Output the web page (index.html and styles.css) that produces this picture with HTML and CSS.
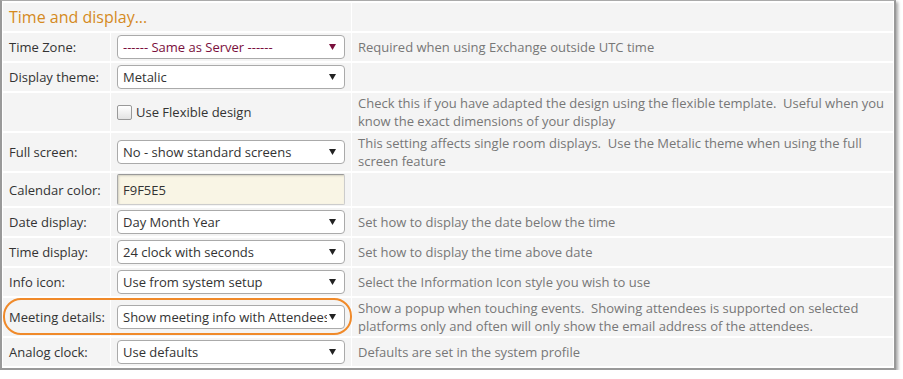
FILE: index.html
```html
<!DOCTYPE html>
<html>
<head>
<meta charset="utf-8">
<link rel="stylesheet" href="styles.css">
</head>
<body>
<div class="frame">
  <table class="settings">
    <colgroup><col class="c1"><col class="c2"><col class="c3"></colgroup>
    <tr class="head"><td colspan="2" class="title">Time and display...</td><td></td></tr>
    <tr><td class="lbl">Time Zone:</td><td class="ctl"><div class="sel maroon"><span class="val">------ Same as Server ------</span><svg class="arr" width="7" height="6" viewBox="0 0 7 6"><path d="M0 0H7L3.5 6Z"/></svg></div></td><td class="desc">Required when using Exchange outside UTC time</td></tr>
    <tr><td class="lbl">Display theme:</td><td class="ctl"><div class="sel"><span class="val">Metalic</span><svg class="arr" width="7" height="6" viewBox="0 0 7 6"><path d="M0 0H7L3.5 6Z"/></svg></div></td><td class="desc"></td></tr>
    <tr><td class="lbl"></td><td class="ctl"><div class="chk"><span class="box"></span><span>Use Flexible design</span></div></td><td class="desc two">Check this if you have adapted the design using the flexible template.&nbsp; Useful when you know the exact dimensions of your display</td></tr>
    <tr><td class="lbl">Full screen:</td><td class="ctl"><div class="sel"><span class="val">No - show standard screens</span><svg class="arr" width="7" height="6" viewBox="0 0 7 6"><path d="M0 0H7L3.5 6Z"/></svg></div></td><td class="desc two">This setting affects single room displays.&nbsp; Use the Metalic theme when using the full screen feature</td></tr>
    <tr><td class="lbl">Calendar color:</td><td class="ctl cal"><div class="inp">F9F5E5</div></td><td class="desc"></td></tr>
    <tr><td class="lbl">Date display:</td><td class="ctl"><div class="sel"><span class="val">Day Month Year</span><svg class="arr" width="7" height="6" viewBox="0 0 7 6"><path d="M0 0H7L3.5 6Z"/></svg></div></td><td class="desc">Set how to display the date below the time</td></tr>
    <tr><td class="lbl">Time display:</td><td class="ctl"><div class="sel"><span class="val">24 clock with seconds</span><svg class="arr" width="7" height="6" viewBox="0 0 7 6"><path d="M0 0H7L3.5 6Z"/></svg></div></td><td class="desc">Set how to display the time above date</td></tr>
    <tr><td class="lbl">Info icon:</td><td class="ctl"><div class="sel"><span class="val">Use from system setup</span><svg class="arr" width="7" height="6" viewBox="0 0 7 6"><path d="M0 0H7L3.5 6Z"/></svg></div></td><td class="desc">Select the Information Icon style you wish to use</td></tr>
    <tr><td class="lbl">Meeting details:</td><td class="ctl"><div class="sel"><span class="val">Show meeting info with Attendees</span><svg class="arr" width="7" height="6" viewBox="0 0 7 6"><path d="M0 0H7L3.5 6Z"/></svg></div></td><td class="desc two">Show a popup when touching events.&nbsp; Showing attendees is supported on selected platforms only and often will only show the email address of the attendees.</td></tr>
    <tr><td class="lbl">Analog clock:</td><td class="ctl"><div class="sel"><span class="val">Use defaults</span><svg class="arr" width="7" height="6" viewBox="0 0 7 6"><path d="M0 0H7L3.5 6Z"/></svg></div></td><td class="desc">Defaults are set in the system profile</td></tr>
  </table>
  <div class="highlight"></div>
</div>
</body>
</html>
```
FILE: styles.css
```css
html, body { margin: 0; padding: 0; background: #fff; }
body { font-family: "Open Sans", "Liberation Sans", sans-serif; font-size: 13px; color: #333; }
.frame {
  position: relative;
  width: 892px;
  border: 2px solid #999;
  border-top: 1px solid #aaa;
  background: #fff;
  box-shadow: 2px 2px 3px rgba(0,0,0,0.35);
}
.settings {
  width: 100%;
  border-collapse: separate;
  border-spacing: 1px 2px;
  table-layout: fixed;
}
.c1 { width: 107px; }
.c2 { width: 240px; }
.settings td {
  background: #f4f4f4;
  line-height: 18px;
  vertical-align: middle;
  padding: 0 6px;
}
.head td { height: 28px; padding: 0 6px; }
.title { color: #d58a1e; font-size: 16px; line-height: 22px; }
.lbl { color: #333; white-space: nowrap; }
td.ctl { padding: 2px 6px; }
td.cal { padding: 1px 6px; }
td.desc { color: #777; padding: 1px 6px; }
.sel {
  height: 22px;
  border: 1px solid #aaa;
  border-radius: 4px;
  background: #fff;
  display: flex;
  align-items: center;
  padding: 0 8px 0 5px;
  color: #333;
}
.sel .val { flex: 1; white-space: nowrap; overflow: hidden; }
.sel .arr { flex: none; margin-left: 2px; fill: #222; }
.sel.maroon { color: #7a0f3c; }
.sel.maroon .arr { fill: #7a0f3c; }
.chk { display: flex; align-items: center; gap: 4px; height: 22px; }
.chk .box {
  width: 13px; height: 13px;
  border: 1px solid #999;
  border-radius: 2px;
  background: linear-gradient(#fff, #e3e3e3);
}
.inp {
  height: 29px;
  border: 1px solid #ccc;
  border-top-color: #999;
  border-left-color: #aaa;
  background: #f9f5e5;
  box-shadow: inset 1px 1px 2px rgba(0,0,0,0.15);
  display: flex;
  align-items: center;
  padding: 0 5px;
  color: #333;
  border-radius: 2px;
}
.highlight {
  position: absolute;
  left: 1px;
  top: 297px;
  width: 345px;
  height: 33px;
  border: 2px solid #f08a2a;
  border-radius: 18px;
  pointer-events: none;
}
```
